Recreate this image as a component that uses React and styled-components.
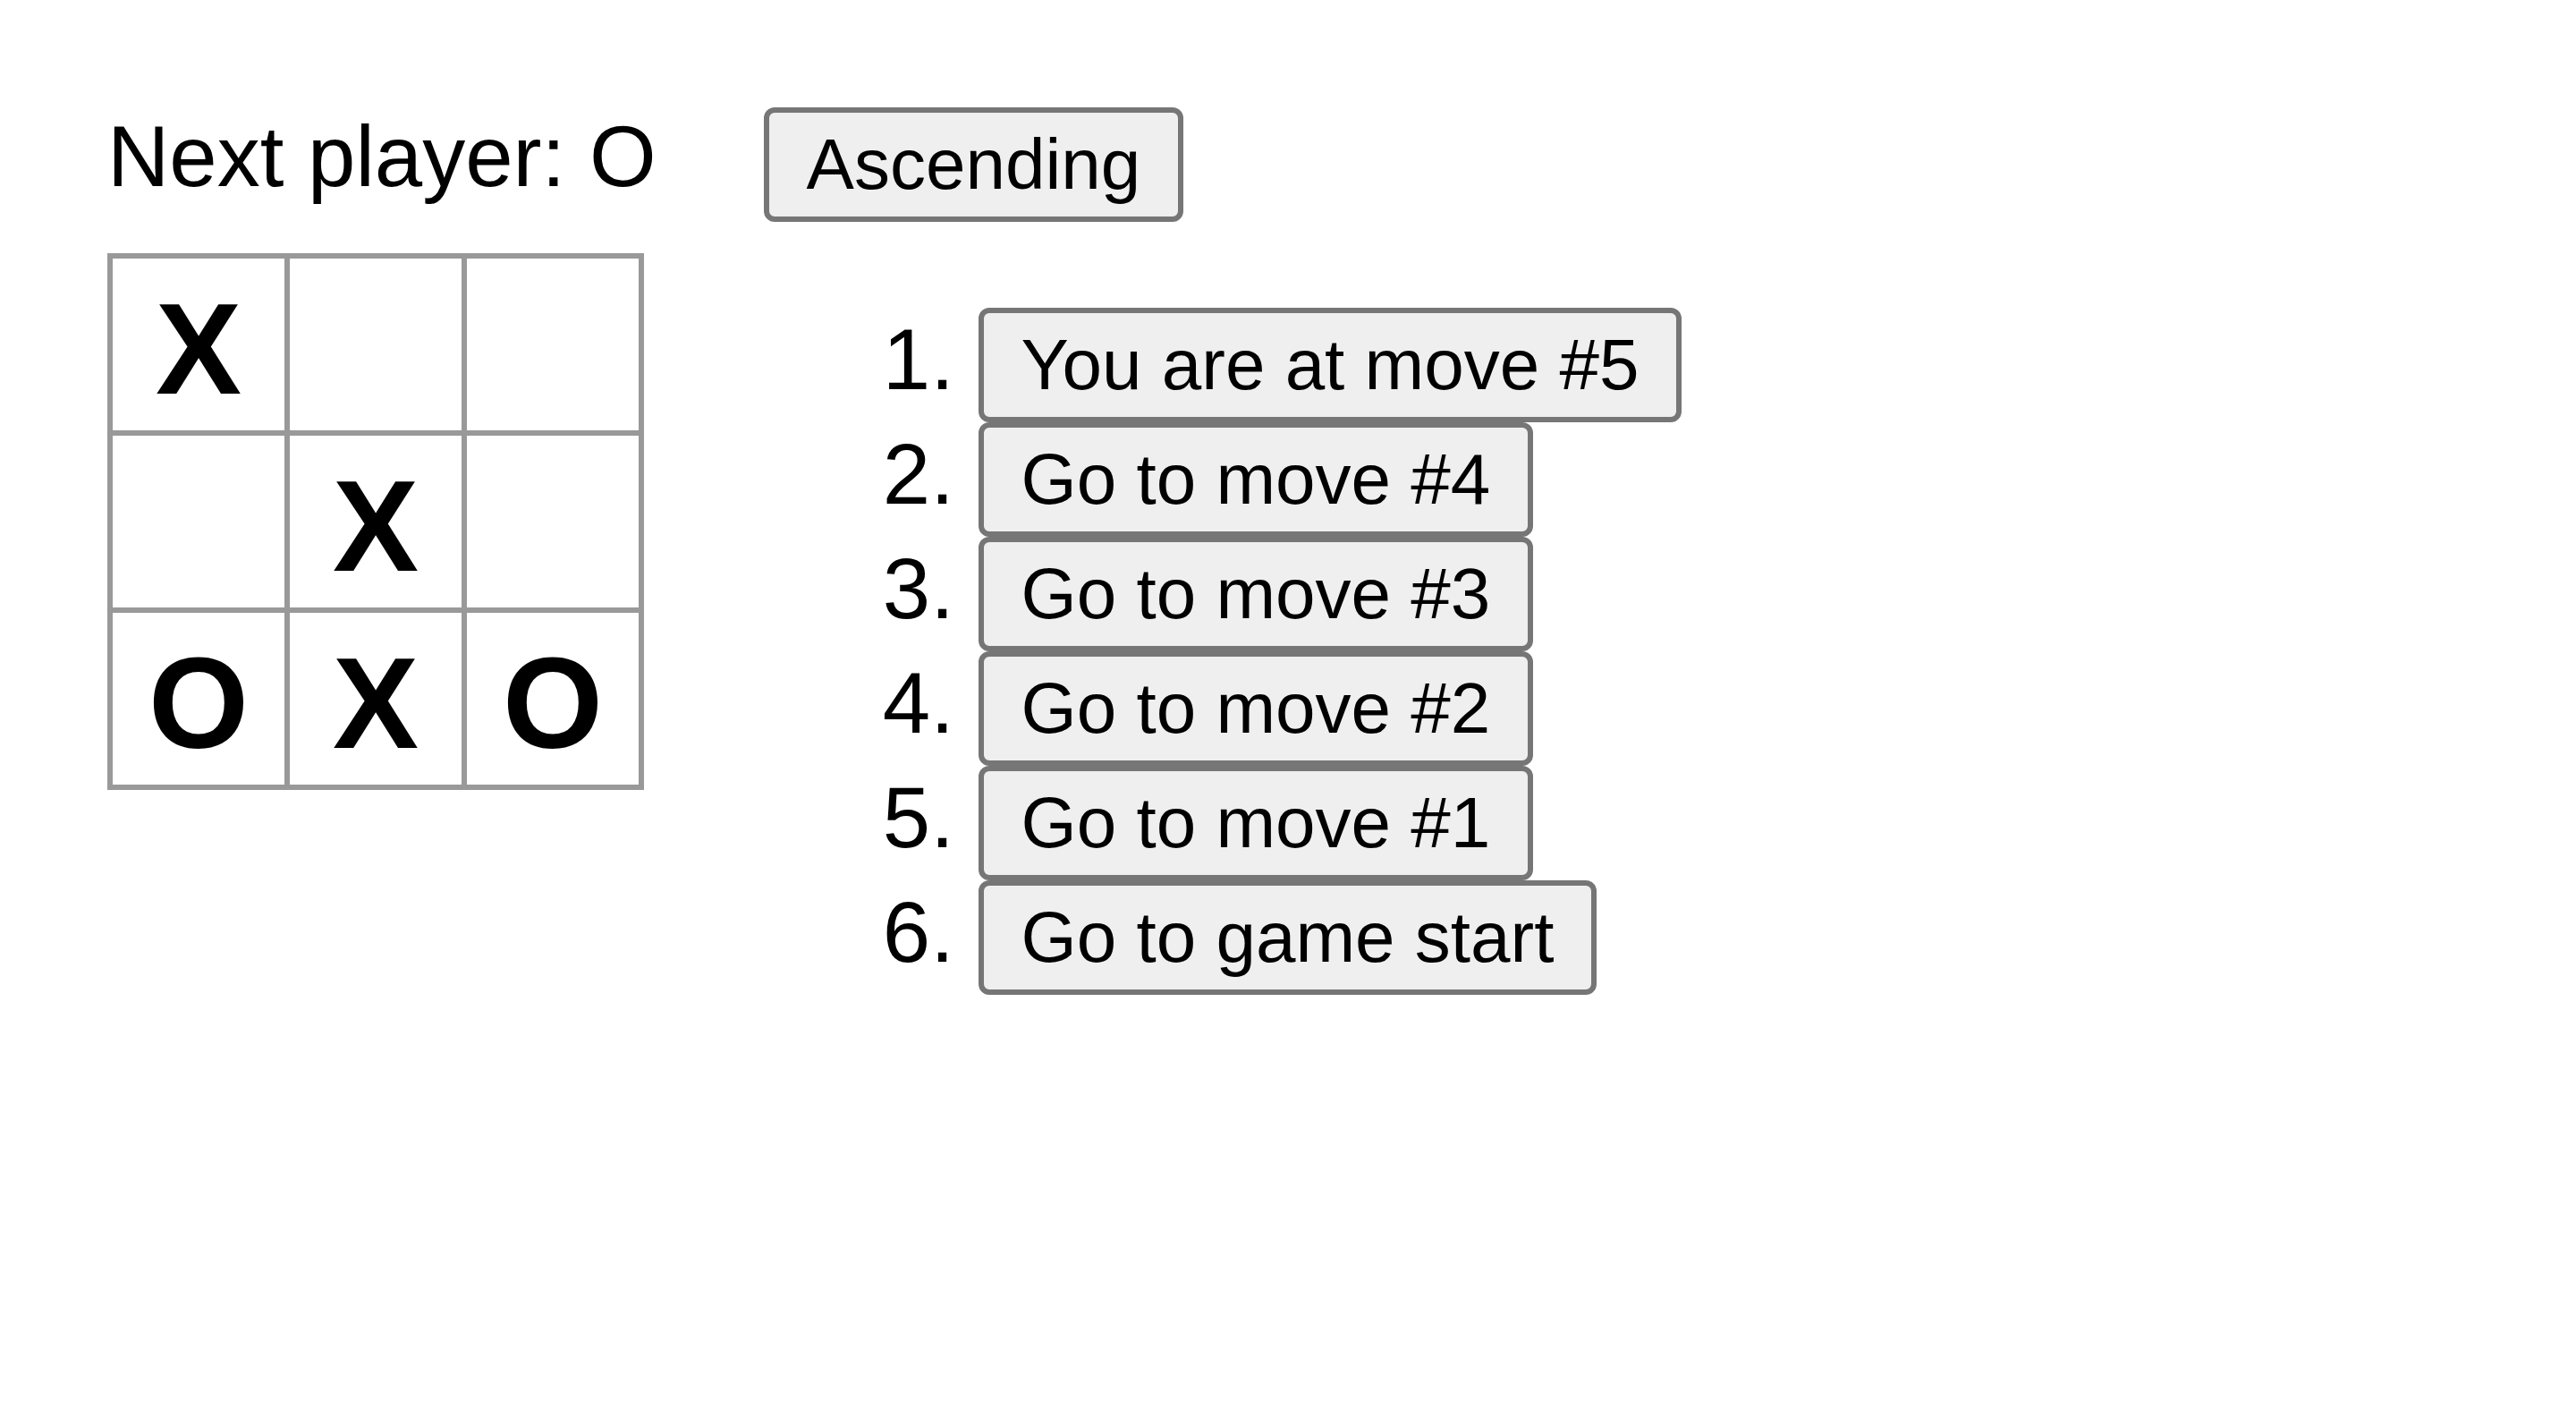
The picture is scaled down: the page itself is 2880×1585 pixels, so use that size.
import React from 'react'
import styled, { createGlobalStyle } from 'styled-components'

const GlobalStyle = createGlobalStyle`
  body {
    margin: 120px;
    background: #ffffff;
    color: #000000;
    font: 96px 'Liberation Sans', Arial, Helvetica, sans-serif;
  }
`

const Game = styled.div`
  display: flex;
  flex-direction: row;
  align-items: flex-start;
`

const GameBoard = styled.div`
  display: flex;
  flex-direction: column;
`

const Status = styled.div`
  line-height: normal;
  margin-bottom: 53px;
  white-space: nowrap;
`

const Board = styled.div`
  display: grid;
  grid-template-columns: repeat(3, 198px);
  grid-auto-rows: 198px;
  width: 600px;
  box-sizing: border-box;
  border-top: 6px solid #999999;
  border-left: 6px solid #999999;
`

const Square = styled.div`
  box-sizing: border-box;
  height: 198px;
  border-right: 6px solid #999999;
  border-bottom: 6px solid #999999;
  background: #ffffff;
  font: bold 144px 'Liberation Sans', Arial, Helvetica, sans-serif;
  line-height: 204px;
  text-align: center;
  color: #000000;
  cursor: pointer;
`

const GameInfo = styled.div`
  margin-left: 120px;
`

const GrayButton = styled.button`
  font: 80px 'Liberation Sans', Arial, Helvetica, sans-serif;
  line-height: normal;
  margin: 0;
  padding: 12px 42px;
  border: 6px solid #767676;
  border-radius: 12px;
  background: #efefef;
  color: #000000;
  white-space: nowrap;
  cursor: pointer;
`

const MoveList = styled.ol`
  margin: 96px 0;
  padding-left: 240px;
`

const squares = ['X', null, null, null, 'X', null, 'O', 'X', 'O']

const moves = [
  'You are at move #5',
  'Go to move #4',
  'Go to move #3',
  'Go to move #2',
  'Go to move #1',
  'Go to game start',
]

export default function App() {
  return (
    <>
      <GlobalStyle />
      <Game>
        <GameBoard>
          <Status>Next player: O</Status>
          <Board>
            {squares.map((v, i) => (
              <Square key={i}>{v}</Square>
            ))}
          </Board>
        </GameBoard>
        <GameInfo>
          <div>
            <GrayButton>Ascending</GrayButton>
          </div>
          <MoveList>
            {moves.map(m => (
              <li key={m}>
                <GrayButton>{m}</GrayButton>
              </li>
            ))}
          </MoveList>
        </GameInfo>
      </Game>
    </>
  )
}
